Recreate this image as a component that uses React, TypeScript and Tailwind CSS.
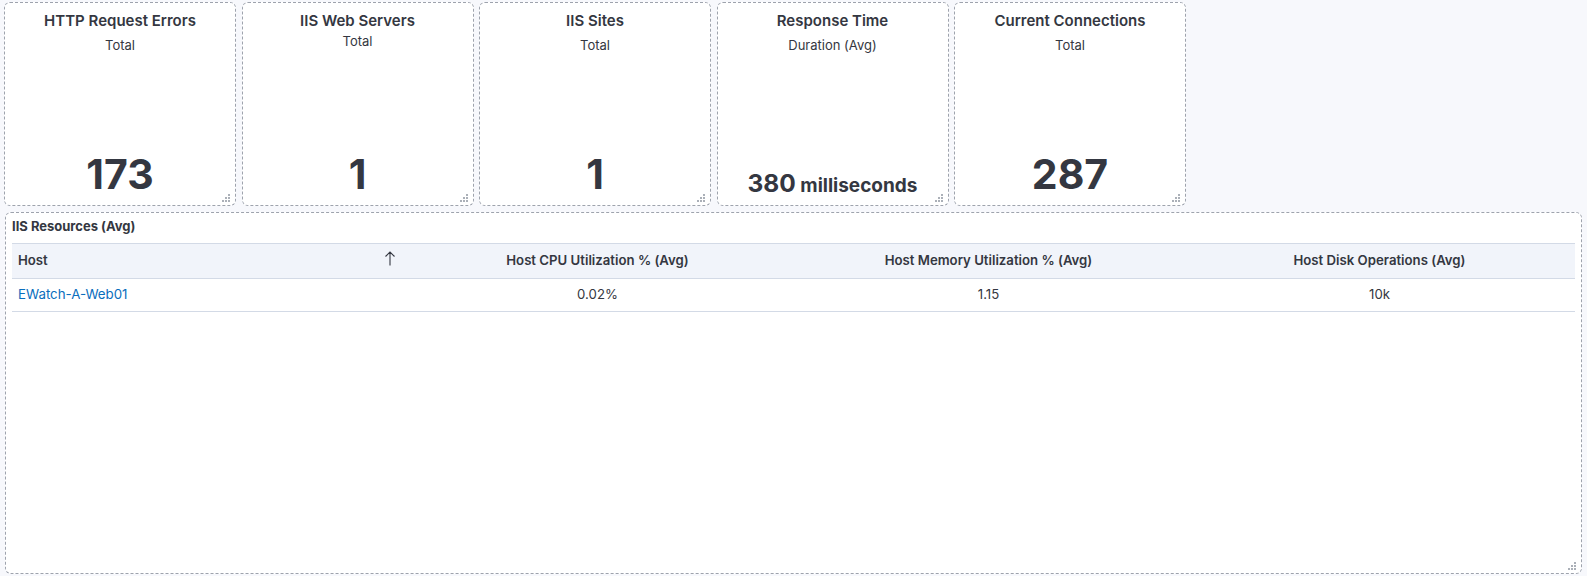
import React from 'react'

type Metric = {
  title: string
  sub: string
  value: React.ReactNode
  subClass?: string
  valueClass?: string
}

const metrics: Metric[] = [
  { title: 'HTTP Request Errors', sub: 'Total', value: '173' },
  { title: 'IIS Web Servers', sub: 'Total', value: '1', subClass: 'mt-[3px]' },
  { title: 'IIS Sites', sub: 'Total', value: '1' },
  {
    title: 'Response Time',
    sub: 'Duration (Avg)',
    valueClass: 'mb-[7px] text-[24.5px] leading-[24px]',
    value: (
      <>
        380<span className="text-[19px]"> milliseconds</span>
      </>
    ),
  },
  { title: 'Current Connections', sub: 'Total', value: '287' },
]

function ResizeHandle() {
  return (
    <svg width="8" height="8" viewBox="0 0 8 8" className="absolute bottom-[3px] right-[5px] text-[#abb0b8]">
      <rect x="6" y="0" width="2" height="2" fill="currentColor" />
      <rect x="3" y="3" width="2" height="2" fill="currentColor" />
      <rect x="6" y="3" width="2" height="2" fill="currentColor" />
      <rect x="0" y="6" width="2" height="2" fill="currentColor" />
      <rect x="3" y="6" width="2" height="2" fill="currentColor" />
      <rect x="6" y="6" width="2" height="2" fill="currentColor" />
    </svg>
  )
}

function MetricCard({ m }: { m: Metric }) {
  return (
    <div className="relative flex h-[204px] w-[232px] shrink-0 flex-col items-center rounded-[6px] border border-dashed border-[#9ea3ad] bg-white">
      <div className="mt-[8.5px] text-[15px] font-semibold leading-[18px] text-[#343741]">{m.title}</div>
      <div className={`${m.subClass ?? 'mt-[7px]'} text-[13px] leading-[16px] text-[#343741]`}>{m.sub}</div>
      <div className={`mt-auto font-bold text-[#343741] ${m.valueClass ?? 'mb-[10px] text-[41px] leading-[41px]'}`}>
        {m.value}
      </div>
      <ResizeHandle />
    </div>
  )
}

const rows = [{ host: 'EWatch-A-Web01', cpu: '0.02%', mem: '1.15', disk: '10k' }]

export default function App() {
  return (
    <div
      className="h-[576px] w-full overflow-hidden bg-[#f7f8fc] pl-[4px] pt-[2px]"
      style={{ fontFamily: 'Inter, "Noto Sans", sans-serif' }}
    >
      <div className="flex gap-[5.5px]">
        {metrics.map(m => (
          <MetricCard key={m.title} m={m} />
        ))}
      </div>

      <div className="relative ml-[1px] mt-[6px] h-[362px] w-[1577px] rounded-[6px] border border-dashed border-[#9ea3ad] bg-white px-[6px]">
        <div className="pt-[5px] text-[13px] font-bold leading-[16px] text-[#343741]">IIS Resources (Avg)</div>
        <table className="mt-[9px] w-[1563px] table-fixed border-collapse text-[13.2px] text-[#343741]">
          <thead>
            <tr className="h-[35px] border-y border-[#d3dae6] bg-[#f1f4fa]">
              <th className="w-[390px] px-[6px] text-left font-semibold">
                <div className="flex items-center justify-between">
                  <span>Host</span>
                  <svg width="12" height="15" viewBox="0 0 12 15" className="mb-[4px]">
                    <path d="M6 1v13.5M1.5 5.5 6 1l4.5 4.5" stroke="#343741" strokeWidth="1.1" fill="none" />
                  </svg>
                </div>
              </th>
              <th className="w-[391px] text-center font-semibold">Host CPU Utilization % (Avg)</th>
              <th className="w-[391px] text-center font-semibold">Host Memory Utilization % (Avg)</th>
              <th className="w-[391px] text-center font-semibold">Host Disk Operations (Avg)</th>
            </tr>
          </thead>
          <tbody>
            {rows.map(r => (
              <tr key={r.host} className="h-[33px] border-b border-[#d3dae6]">
                <td className="px-[6px] text-[13.3px] text-[#0a6ebd]">{r.host}</td>
                <td className="text-center">{r.cpu}</td>
                <td className="text-center">{r.mem}</td>
                <td className="text-center">{r.disk}</td>
              </tr>
            ))}
          </tbody>
        </table>
        <ResizeHandle />
      </div>
    </div>
  )
}
